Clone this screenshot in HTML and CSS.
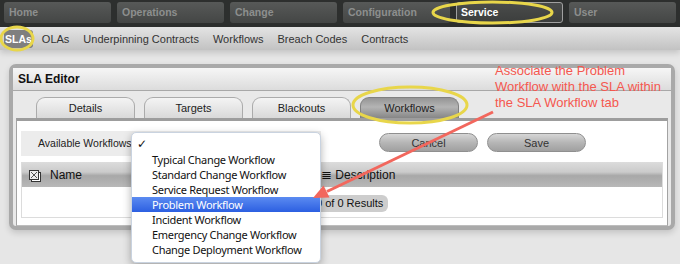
FILE: index.html
```html
<!DOCTYPE html>
<html lang="en">
<head>
    <meta charset="UTF-8">
    <title>SLA Editor</title>
    <link rel="stylesheet" href="styles.css">
</head>
<body>
    <div class="topNav">
        <div class="topTab">Home</div>
        <div class="topTab">Operations</div>
        <div class="topTab">Change</div>
        <div class="topTab">Configuration</div>
        <div class="topTab active">Service</div>
        <div class="topTab">User</div>
    </div>
    <div class="subNav">
        <span class="subItem current">SLAs</span>
        <span class="subItem">OLAs</span>
        <span class="subItem">Underpinning Contracts</span>
        <span class="subItem">Workflows</span>
        <span class="subItem">Breach Codes</span>
        <span class="subItem">Contracts</span>
    </div>

    <div class="page">
        <div class="panel">
            <div class="panelHead">SLA Editor</div>
            <div class="tabs">
                <div class="tab">Details</div>
                <div class="tab">Targets</div>
                <div class="tab">Blackouts</div>
                <div class="tab selected">Workflows</div>
            </div>
            <div class="content">
                <div class="formRow">
                    <div class="fieldLabel">Available Workflows</div>
                    <div class="actions">
                        <button class="pill">Cancel</button>
                        <button class="pill">Save</button>
                    </div>
                </div>
                <div class="grid">
                    <div class="gridHead">
                        <svg class="selIcon" width="12" height="12" viewBox="0 0 12 12">
                            <rect x="2.5" y="2.5" width="9" height="9" fill="#fff" stroke="#333"/>
                            <rect x="0.5" y="0.5" width="9" height="9" fill="#eee" stroke="#333"/>
                            <path d="M2 2 L8 8 M8 2 L2 8" stroke="#555" stroke-width="1"/>
                        </svg>
                        <span class="colName">Name</span>
                        <span class="colDesc"><span class="lines">&#8803;</span> Description</span>
                    </div>
                    <div class="gridBody">
                        <span class="results">0 of 0 Results</span>
                    </div>
                </div>
            </div>
        </div>
    </div>

    <!-- open select list -->
    <ul class="dropList">
        <li class="checked">&#10003;</li>
        <li>Typical Change Workflow</li>
        <li>Standard Change Workflow</li>
        <li>Service Request Workflow</li>
        <li class="hover">Problem Workflow</li>
        <li>Incident Workflow</li>
        <li>Emergency Change Workflow</li>
        <li>Change Deployment Workflow</li>
    </ul>

    <div class="note">Associate the Problem<br>Workflow with the SLA within<br>the SLA Workflow tab</div>

    <svg class="marks" width="680" height="264" viewBox="0 0 680 264">
        <ellipse cx="17" cy="38.5" rx="16" ry="11.5" fill="none" stroke="#e8d64a" stroke-width="3"/>
        <ellipse cx="492.5" cy="12.5" rx="59.5" ry="10.5" fill="none" stroke="#e8d64a" stroke-width="3"/>
        <ellipse cx="410" cy="105" rx="57" ry="18" fill="none" stroke="#e8d64a" stroke-width="3"/>
        <line x1="493" y1="112" x2="327" y2="191.5" stroke="#f2675d" stroke-width="3"/>
        <polygon points="313,198 329.5,197.5 323.5,185.5" fill="#f2675d"/>
    </svg>
</body>
</html>
```

FILE: styles.css
```css
*{
    padding: 0;
    margin: 0;
    box-sizing: border-box;
}
body{
    width: 680px;
    height: 264px;
    overflow: hidden;
    position: relative;
    background: #e6e6e6;
    font-family: "Liberation Sans", Arial, sans-serif;
}
.topNav{
    display: flex;
    gap: 6px;
    height: 27px;
    padding: 2px 4px 4px;
    background: #2d2f2e;
}
.topTab{
    width: 107px;
    height: 21px;
    padding-left: 5px;
    line-height: 21px;
    border-radius: 3px;
    background: linear-gradient(#575958, #444645);
    color: #8d8f8e;
    font-size: 10.5px;
    font-weight: bold;
}
.topTab.active{
    background: linear-gradient(#4a4c4b, #3c3e3d);
    border: 1px solid #a0a0a0;
    line-height: 19px;
    padding-left: 4px;
    color: #fff;
}
.subNav{
    display: flex;
    align-items: center;
    height: 23px;
    padding: 0 4px;
    background: linear-gradient(#e4e4e4, #c2c2c2);
    box-shadow: 0 3px 6px rgba(0, 0, 0, 0.15);
}
.subItem{
    padding: 0 7px;
    font-size: 11px;
    color: #333;
}
.subItem.current{
    padding: 3px 1px;
    margin-right: 2px;
    border-radius: 3px;
    background: #7f7f7f;
    color: #fff;
    font-size: 10.5px;
    font-weight: bold;
}
.page{
    padding: 14px 5px 0 9px;
}
.panel{
    width: 666px;
    height: 166px;
    border: 4px solid #a9a9a9;
    border-radius: 7px;
    background: #e9e9e9;
    box-shadow: 0 3px 6px rgba(0, 0, 0, 0.15);
}
.panelHead{
    height: 23px;
    padding-left: 5px;
    line-height: 22px;
    border-bottom: 1px solid #a8a8a8;
    background: linear-gradient(#f6f6f6, #dcdcdc);
    font-size: 12px;
    font-weight: bold;
    color: #111;
}
.tabs{
    display: flex;
    align-items: flex-end;
    gap: 9px;
    height: 27px;
    padding-left: 23px;
}
.tab{
    width: 99px;
    height: 21px;
    line-height: 20px;
    text-align: center;
    border: 1px solid #ababab;
    border-bottom: none;
    border-radius: 9px 9px 0 0;
    background: linear-gradient(#f4f4f4, #d9d9d9);
    font-size: 11px;
    color: #222;
}
.tab.selected{
    background: linear-gradient(#959595, #b4b4b4 45%, #868686);
    border-color: #808080;
}
.content{
    height: 108px;
    margin: 0 3px 0 3px;
    padding: 10px 4px 0;
    border-top: 3px solid #9d9d9d;
    border-left: 1px solid #a3a3a3;
    border-right: 1px solid #a3a3a3;
    border-bottom: 1px solid #bdbdbd;
    background: #fff;
}
.formRow{
    display: flex;
    align-items: center;
    height: 25px;
}
.fieldLabel{
    width: 300px;
    height: 25px;
    padding-left: 17px;
    line-height: 25px;
    background: #ececec;
    font-size: 10.5px;
    color: #222;
}
.actions{
    display: flex;
    gap: 9px;
    margin-left: 58px;
    margin-top: -2px;
}
.pill{
    width: 99px;
    height: 19px;
    border: 1px solid #8f8f8f;
    border-radius: 10px;
    background: linear-gradient(#d6d6d6, #b6b6b6 50%, #a0a0a0);
    font-family: "Liberation Sans", Arial, sans-serif;
    font-size: 11px;
    color: #333;
}
.grid{
    margin-top: 6px;
    height: 56px;
    border: 1px solid #dcdcdc;
    border-top: none;
}
.gridHead{
    display: flex;
    align-items: center;
    height: 25px;
    background: linear-gradient(#dcdcdc, #cbcbcb 40%, #a8a8a8 55%, #b8b8b8);
    font-size: 12px;
    color: #111;
}
.selIcon{
    margin-left: 7px;
    margin-top: 3px;
}
.colName{
    margin-left: 9px;
}
.colDesc{
    margin-left: 239px;
}
.lines{
    font-size: 13px;
}
.gridBody{
    padding: 6px 0 0 288px;
}
.results{
    display: inline-block;
    height: 17px;
    padding: 0 5px 0 6px;
    line-height: 17px;
    border-radius: 6px;
    background: #cdcdcd;
    font-size: 11px;
    color: #111;
}
.dropList{
    position: absolute;
    left: 131px;
    top: 132px;
    width: 190px;
    padding: 4px 0 5px;
    list-style: none;
    background: #fff;
    border: 1px solid #c9d3e0;
    border-radius: 5px;
    box-shadow: 0 3px 8px rgba(0, 0, 0, 0.3);
    font-family: "Noto Sans", sans-serif;
    font-size: 11px;
    letter-spacing: -0.3px;
    color: #111;
}
.dropList li{
    height: 15px;
    padding-left: 20px;
    line-height: 15px;
}
.dropList li.checked{
    padding-left: 5px;
    font-family: "DejaVu Sans", sans-serif;
    font-size: 12px;
}
.dropList li.hover{
    background: linear-gradient(#5b8bf1, #2c5fe1);
    color: #fff;
}
.note{
    position: absolute;
    left: 495px;
    top: 63px;
    font-size: 13px;
    line-height: 16px;
    color: #f5574f;
}
.marks{
    position: absolute;
    left: 0;
    top: 0;
    pointer-events: none;
}
```
